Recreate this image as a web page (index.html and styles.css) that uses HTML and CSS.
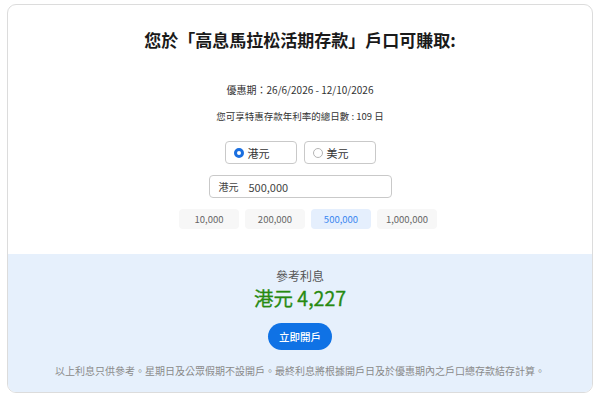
FILE: index.html
```html
<!DOCTYPE html>
<html lang="zh-Hant">
<head>
    <meta charset="UTF-8">
    <meta name="viewport" content="width=device-width, initial-scale=1.0">
    <title>高息馬拉松活期存款</title>
    <link rel="stylesheet" href="styles.css">
</head>
<body>
    <div class="calc-card">
        <div class="calc-top">
            <h1>您於「高息馬拉松活期存款」戶口可賺取:</h1>
            <p class="period">優惠期：26/6/2026 - 12/10/2026</p>
            <p class="days">您可享特惠存款年利率的總日數 : 109 日</p>

            <!-- Currency choice -->
            <div class="currency-row">
                <label class="currency-opt">
                    <span class="radio checked"></span>港元
                </label>
                <label class="currency-opt">
                    <span class="radio"></span>美元
                </label>
            </div>

            <div class="amount-box">
                <span class="amount-unit">港元</span>
                <span class="amount-value">500,000</span>
            </div>

            <!-- Quick amount buttons -->
            <div class="preset-row">
                <button class="preset">10,000</button>
                <button class="preset">200,000</button>
                <button class="preset active">500,000</button>
                <button class="preset">1,000,000</button>
            </div>
        </div>

        <div class="calc-result">
            <p class="result-label">參考利息</p>
            <p class="result-amount">港元 4,227</p>
            <button class="open-btn">立即開戶</button>
            <p class="note">以上利息只供參考。星期日及公眾假期不設開戶。最終利息將根據開戶日及於優惠期內之戶口總存款結存計算。</p>
        </div>
    </div>
</body>
</html>
```

FILE: styles.css
```css
/* Page base */
body {
    margin: 0;
    padding-top: 4px;
    font-family: "Noto Sans CJK TC", "Noto Sans", sans-serif;
    background-color: #fff;
    color: #222;
}

p {
    margin: 0;
}

.calc-card {
    width: 584px;
    margin: 0 auto;
    border: 1px solid #dcdcdc;
    border-radius: 9px;
    overflow: hidden;
    background-color: #fff;
}

/* Upper part: inputs */
.calc-top {
    display: flex;
    flex-direction: column;
    align-items: center;
    padding: 23px 0 25px;
}

h1 {
    margin: 0;
    font-size: 17px;
    line-height: 24px;
    font-weight: 700;
    color: #1a1a1a;
}

.period,
.days {
    font-size: 10px;
    line-height: 16px;
    color: #333;
}

.period {
    margin-top: 30px;
}

.days {
    margin-top: 10px;
    font-size: 9.5px;
}

.currency-row {
    display: flex;
    gap: 7px;
    margin-top: 17px;
}

.currency-opt {
    display: flex;
    align-items: center;
    gap: 4px;
    box-sizing: border-box;
    width: 72px;
    height: 23px;
    padding-left: 8px;
    border: 1px solid #c9c9c9;
    border-radius: 4px;
    font-size: 11px;
    color: #333;
}

.radio {
    box-sizing: border-box;
    width: 10px;
    height: 10px;
    border: 1px solid #b5b5b5;
    border-radius: 50%;
}

.radio.checked {
    border: 3px solid #1a6fe0;
}

.amount-box {
    display: flex;
    align-items: center;
    box-sizing: border-box;
    width: 183px;
    height: 23px;
    margin-top: 11px;
    padding-left: 9px;
    border: 1px solid #c9c9c9;
    border-radius: 4px;
    font-size: 10px;
    color: #444;
}

.amount-value {
    margin-left: 10px;
    font-size: 11px;
}

.preset-row {
    display: flex;
    gap: 6px;
    margin-top: 11px;
    padding-left: 16px;
}

.preset {
    width: 60px;
    height: 20px;
    border: none;
    border-radius: 4px;
    background-color: #f7f7f7;
    font-family: inherit;
    font-size: 9.5px;
    color: #666;
    padding: 0;
}

.preset.active {
    background-color: #e5effd;
    color: #3a86f0;
}

/* Lower part: result */
.calc-result {
    display: flex;
    flex-direction: column;
    align-items: center;
    padding: 13px 0 14px;
    background-color: #e6f0fc;
}

.result-label {
    font-size: 12px;
    line-height: 18px;
    color: #555;
}

.result-amount {
    font-size: 19.5px;
    line-height: 26px;
    font-weight: 400;
    color: #278a10;
    -webkit-text-stroke: 0.3px #278a10;
}

.open-btn {
    margin-top: 12px;
    width: 64px;
    height: 27px;
    border: none;
    border-radius: 14px;
    background-color: #0f72e5;
    color: #fff;
    font-family: inherit;
    font-size: 10.5px;
    font-weight: 500;
    padding: 0;
}

.note {
    margin-top: 14px;
    font-size: 10px;
    line-height: 14px;
    color: #8a8a8a;
}
```
